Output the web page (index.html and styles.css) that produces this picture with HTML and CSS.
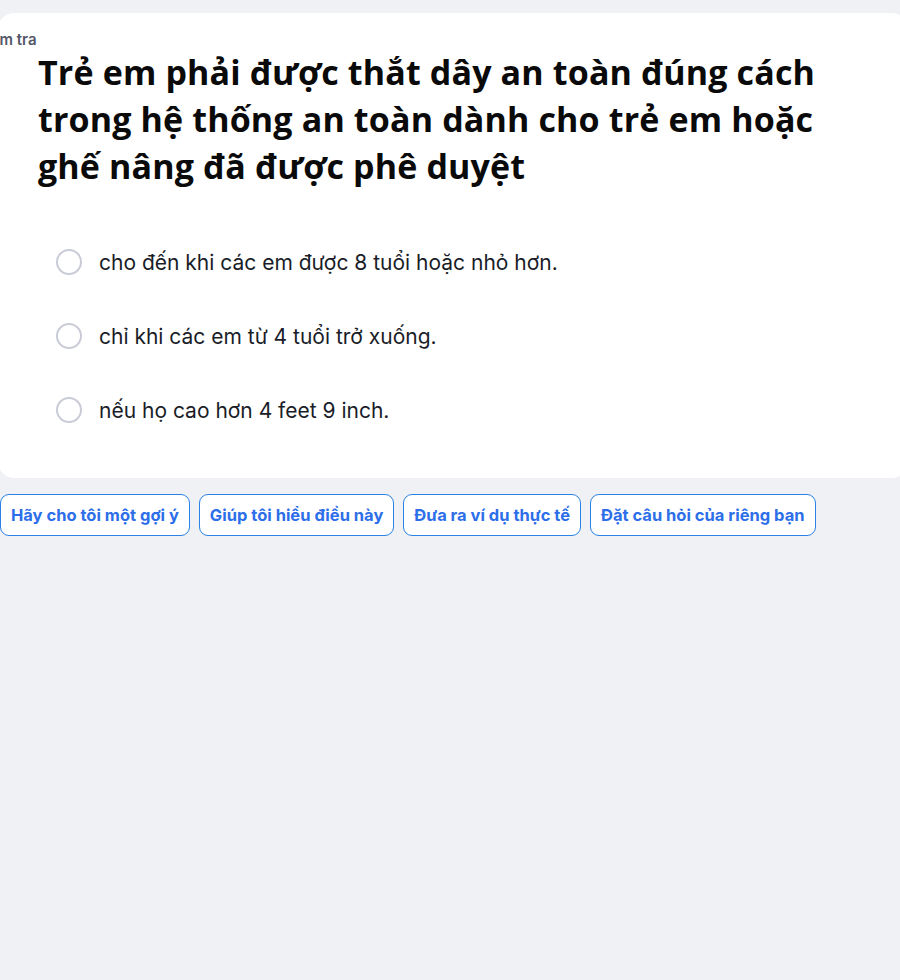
FILE: index.html
```html
<!DOCTYPE html>
<html lang="vi">
<head>
<meta charset="utf-8">
<title>Kiểm tra</title>
<link rel="stylesheet" href="styles.css">
</head>
<body>
<div class="page">
  <section class="card">
    <div class="label">Kiểm tra</div>
    <h1 class="title">Trẻ em phải được thắt dây an toàn đúng cách trong hệ thống an toàn dành cho trẻ em hoặc ghế nâng đã được phê duyệt</h1>
    <div class="options">
      <label class="option"><span class="radio"></span><span class="opt-text">cho đến khi các em được 8 tuổi hoặc nhỏ hơn.</span></label>
      <label class="option"><span class="radio"></span><span class="opt-text">chỉ khi các em từ 4 tuổi trở xuống.</span></label>
      <label class="option"><span class="radio"></span><span class="opt-text">nếu họ cao hơn 4 feet 9 inch.</span></label>
    </div>
  </section>
  <div class="actions">
    <button class="chip">Hãy cho tôi một gợi ý</button>
    <button class="chip">Giúp tôi hiểu điều này</button>
    <button class="chip">Đưa ra ví dụ thực tế</button>
    <button class="chip">Đặt câu hỏi của riêng bạn</button>
  </div>
</div>
</body>
</html>
```
FILE: styles.css
```css
html, body {
  margin: 0;
  padding: 0;
  background: #f0f1f5;
  overflow: hidden;
}
body {
  font-family: Inter, "Noto Sans", "Liberation Sans", sans-serif;
  color: #1a1d28;
}
.page {
  padding-top: 13px;
  display: flex;
  flex-direction: column;
}
.card {
  margin-left: -2px;
  width: 910px;
  height: 465px;
  box-sizing: border-box;
  background: #ffffff;
  border-radius: 16px;
  padding: 18px 0 0 40px;
}
.label {
  margin-left: -62px;
  font-size: 15px;
  line-height: 18px;
  font-weight: 600;
  color: #545867;
}
.title {
  margin: 0;
  max-width: 795px;
  font-family: "Open Sans", "Noto Sans", sans-serif;
  font-size: 34px;
  line-height: 47px;
  letter-spacing: 0.15px;
  font-weight: 700;
  color: #0a0a0a;
}
.options {
  margin-top: 59px;
  padding-left: 18px;
  display: flex;
  flex-direction: column;
  gap: 48px;
}
.option {
  display: flex;
  align-items: center;
  gap: 17px;
  height: 26px;
}
.radio {
  width: 26px;
  height: 26px;
  box-sizing: border-box;
  border: 2px solid #c9cbd6;
  border-radius: 50%;
  flex: none;
}
.opt-text {
  font-size: 21px;
  color: #1a1d28;
}
.actions {
  margin-top: 16px;
  display: flex;
  gap: 9px;
}
.chip {
  height: 42px;
  padding: 0 10px;
  background: #ffffff;
  border: 1px solid #2a82e6;
  border-radius: 9px;
  font-family: inherit;
  font-size: 16.5px;
  font-weight: 700;
  color: #2d6ee9;
  white-space: nowrap;
}
```
